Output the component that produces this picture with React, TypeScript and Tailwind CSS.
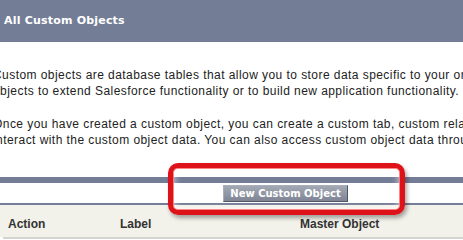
export default function App() {
  return (
    <div className="relative w-[463px] h-[240px] overflow-hidden bg-white font-['Liberation_Sans',Arial,sans-serif] text-[#222]">
      <div className="h-[42px] bg-[#737d96] pl-[4px] pt-[14px]">
        <h1 className="font-['DejaVu_Sans',Verdana,sans-serif] text-[11px] leading-[14px] font-bold tracking-[0.2px] text-white">
          All Custom Objects
        </h1>
      </div>

      <div className="ml-[-7px] w-[585px] pt-[25px] text-[12px] leading-[16px] tracking-[0.44px]">
        <p className="whitespace-nowrap">
          Custom objects are database tables that allow you to store data specific to your organization. You can use custom
          <br />
          objects to extend Salesforce functionality or to build new application functionality.
        </p>
        <p className="mt-[17px] whitespace-nowrap">
          Once you have created a custom object, you can create a custom tab, custom related lists, reports, and dashboards for users to
          <br />
          interact with the custom object data. You can also access custom object data through the Force.com API.
        </p>
      </div>

      <div className="mt-[29px] h-[6px] bg-[#737d96]" />
      <div className="ml-[-7px] w-[585px] h-[20px] flex justify-center pt-[2px]">
        <button className="h-[17px] px-[6px] border border-t-[#a9aebb] border-l-[#a9aebb] border-r-[#4f5563] border-b-[#4f5563] bg-[linear-gradient(#a3a8b4,#7f8595)] font-['DejaVu_Sans',Verdana,sans-serif] text-[10px] leading-[14px] font-bold text-white">
          New Custom Object
        </button>
      </div>
      <div className="h-[2px] bg-[#737d96]" />
      <div className="flex h-[32px] bg-[#f2f1ea] pt-[11px] text-[12px] leading-[16px] font-bold text-[#333]">
        <div className="w-[120px] pl-[8px]">Action</div>
        <div className="w-[180px]">Label</div>
        <div>Master Object</div>
      </div>
      <div className="ml-[3px] h-[2px] bg-[#d5d5d0]" />

      <div className="absolute left-[168px] top-[163px] w-[237px] h-[52px] rounded-[10px] border-[5px] border-[#de1219] shadow-[2px_3px_4px_rgba(0,0,0,0.35),inset_0_0_0_1px_rgba(255,120,120,0.9),inset_0_0_6px_2px_rgba(255,255,255,0.55)]" />
    </div>
  );
}
